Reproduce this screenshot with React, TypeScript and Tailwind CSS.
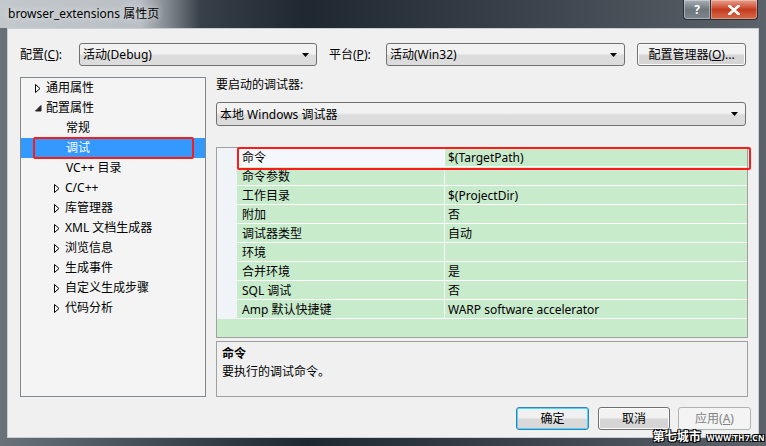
import React from 'react'

const font = { fontFamily: '"Noto Sans", "Noto Sans CJK SC", sans-serif' }

interface TreeItem {
  label: string
  level: 0 | 1
  expander?: 'closed' | 'open'
  selected?: boolean
}

const treeItems: TreeItem[] = [
  { label: '通用属性', level: 0, expander: 'closed' },
  { label: '配置属性', level: 0, expander: 'open' },
  { label: '常规', level: 1 },
  { label: '调试', level: 1, selected: true },
  { label: 'VC++ 目录', level: 1 },
  { label: 'C/C++', level: 1, expander: 'closed' },
  { label: '库管理器', level: 1, expander: 'closed' },
  { label: 'XML 文档生成器', level: 1, expander: 'closed' },
  { label: '浏览信息', level: 1, expander: 'closed' },
  { label: '生成事件', level: 1, expander: 'closed' },
  { label: '自定义生成步骤', level: 1, expander: 'closed' },
  { label: '代码分析', level: 1, expander: 'closed' },
]

const props = [
  { name: '命令', value: '$(TargetPath)' },
  { name: '命令参数', value: '' },
  { name: '工作目录', value: '$(ProjectDir)' },
  { name: '附加', value: '否' },
  { name: '调试器类型', value: '自动' },
  { name: '环境', value: '' },
  { name: '合并环境', value: '是' },
  { name: 'SQL 调试', value: '否' },
  { name: 'Amp 默认快捷键', value: 'WARP software accelerator' },
]

const DropArrow = () => (
  <svg width="7" height="4" viewBox="0 0 7 4" className="shrink-0">
    <path d="M0 0 H7 L3.5 4 Z" fill="#000" />
  </svg>
)

const Expander = ({ kind }: { kind: 'closed' | 'open' }) =>
  kind === 'closed' ? (
    <svg width="6" height="9" viewBox="0 0 6 9">
      <path d="M0.5 0.5 L5 4.5 L0.5 8.5 Z" fill="#fff" stroke="#000" strokeWidth="1" />
    </svg>
  ) : (
    <svg width="7" height="7" viewBox="0 0 7 7">
      <path d="M6 0.5 L6 6 L0.5 6 Z" fill="#262626" stroke="#262626" strokeWidth="1" />
    </svg>
  )

const Combo = ({ text, className }: { text: string; className: string }) => (
  <div
    className={`flex items-center justify-between rounded-[3px] border border-[#707070] bg-gradient-to-b from-[#f2f2f2] from-45% to-[#dcdcdc] to-55% pl-[3px] pr-[7px] text-[12px] ${className}`}
  >
    <span className="pt-[1px] leading-[16px]">{text}</span>
    <DropArrow />
  </div>
)

const WinButton = ({
  children,
  className = '',
  variant = 'normal',
}: {
  children: React.ReactNode
  className?: string
  variant?: 'normal' | 'default' | 'disabled'
}) => {
  const look =
    variant === 'default'
      ? 'border-[#3c7fb1] shadow-[inset_0_0_0_1px_#48d8fb] bg-gradient-to-b from-[#f0f0f0] from-45% to-[#d9d9d9] to-55% text-black'
      : variant === 'disabled'
        ? 'border-[#adb2b5] bg-[#f4f4f4] text-[#838383]'
        : 'border-[#707070] shadow-[inset_0_0_0_1px_#fcfcfc] bg-gradient-to-b from-[#f2f2f2] from-45% to-[#d5d5d5] to-55% text-black'
  return (
    <div
      className={`flex h-[23px] items-center justify-center rounded-[3px] border text-[12px] ${look} ${className}`}
    >
      <span className="leading-[16px]">{children}</span>
    </div>
  )
}

export default function App() {
  return (
    <div
      style={font}
      className="relative flex h-[446px] w-[766px] flex-col overflow-hidden bg-gradient-to-r from-[#6a7279] via-[#1f2731] via-40% to-[#5c636a] text-black"
    >
      {/* title bar */}
      <div className="relative flex h-[28px] shrink-0 items-start">
        <div className="absolute left-0 top-0 h-[28px] w-[200px] bg-gradient-to-r from-[#c3c8cc] via-[#b9bfc4] via-70% to-transparent" />
        <span className="relative ml-[8px] mt-[5px] text-[12px] leading-[18px] text-black [text-shadow:0_0_6px_#eef0f2]">
          browser_extensions 属性页
        </span>
        <div className="relative ml-auto mr-[8px] flex h-[20px]">
          <div className="flex w-[28px] items-center justify-center rounded-bl-[4px] border border-t-0 border-[#2a2f35] bg-gradient-to-b from-[#a9afb5] via-[#6f777e] to-[#7d858c] text-[12px] font-bold leading-none text-white shadow-[inset_0_0_0_1px_rgba(255,255,255,0.35)]">
            ?
          </div>
          <div className="flex w-[47px] items-center justify-center rounded-br-[4px] border border-l-0 border-t-0 border-[#2a2f35] bg-gradient-to-b from-[#e7a08c] via-[#c63a1e] to-[#d4694a] text-[13px] font-bold leading-none text-white shadow-[inset_0_0_0_1px_rgba(255,255,255,0.3)]">
            <svg width="12" height="10" viewBox="0 0 12 10">
              <path d="M1.5 1 L10.5 9 M10.5 1 L1.5 9" stroke="#fff" strokeWidth="2.6" strokeLinecap="square" />
            </svg>
          </div>
        </div>
      </div>

      {/* client area */}
      <div className="mx-[7px] flex h-[410px] flex-col border border-[#c9ced2] bg-[#f0f0f0] pl-[12px] pt-[14px]">
        {/* config row */}
        <div className="flex h-[23px] items-center">
          <span className="w-[59px] text-[12px] leading-[16px]">
            配置(<u>C</u>):
          </span>
          <Combo text="活动(Debug)" className="h-[23px] w-[238px]" />
          <span className="ml-[12px] w-[57px] text-[12px] leading-[16px]">
            平台(<u>P</u>):
          </span>
          <Combo text="活动(Win32)" className="h-[23px] w-[239px]" />
          <WinButton className="ml-[12px] w-[109px]">
            配置管理器(<u>O</u>)...
          </WinButton>
        </div>

        {/* main */}
        <div className="mt-[11px] flex h-[320px]">
          {/* tree */}
          <div className="relative h-[320px] w-[186px] border border-[#828790] bg-[#f4f4f4]">
            {treeItems.map((item) => (
              <div
                key={item.label}
                className={`flex h-[20px] items-center text-[12px] ${
                  item.selected ? 'bg-[#3399ff] text-white' : ''
                }`}
              >
                <div
                  className={`flex w-[12px] items-center justify-center ${
                    item.level === 0 ? 'ml-[11px]' : 'ml-[30px]'
                  }`}
                >
                  {item.expander && <Expander kind={item.expander} />}
                </div>
                <span
                  className={`leading-[16px] ${
                    item.level === 1 && !item.expander ? 'ml-[3px]' : 'ml-[2px]'
                  }`}
                >
                  {item.label}
                </span>
              </div>
            ))}
            <div className="absolute left-[12px] top-[59px] h-[22px] w-[161px] rounded-[2px] border-2 border-[#ff1a1a]" />
          </div>

          {/* right panel */}
          <div className="ml-[10px] flex w-[532px] flex-col">
            <div className="h-[25px] pt-[1px] text-[12px] leading-[14px]">要启动的调试器:</div>
            <Combo text="本地 Windows 调试器" className="h-[24px] w-[530px]" />

            {/* property grid */}
            <div className="relative mt-[21px] flex h-[191px] flex-col border border-[#a0a0a0] bg-[#c8ebcc]">
              <div className="flex">
                <div className="w-[20px] shrink-0 bg-[#f0f4f9]" />
                <div className="flex flex-1 flex-col">
                  {props.map((p, i) => (
                    <div key={p.name} className="flex h-[19px] border-b border-white text-[12px]">
                      <div
                        className={`flex w-[207px] items-center pl-[5px] pt-[2px] ${
                          i === 0 ? 'bg-[#f4f7fc]' : ''
                        }`}
                      >
                        <span className="leading-[16px]">{p.name}</span>
                      </div>
                      <div className="flex flex-1 items-center border-l border-white pl-[3px] pt-[2px]">
                        <span className="leading-[16px]">{p.value}</span>
                      </div>
                    </div>
                  ))}
                </div>
              </div>
              <div className="absolute left-[20px] top-[-1px] h-[23px] w-[514px] rounded-[2px] border-2 border-[#ff1a1a]" />
            </div>

            {/* description */}
            <div className="mt-[3px] h-[56px] border border-[#a0a0a0] bg-[#f0f0f0] pl-[5px] pt-[3px] text-[12px]">
              <div className="font-bold leading-[18px]">命令</div>
              <div className="leading-[18px]">要执行的调试命令。</div>
            </div>
          </div>
        </div>

        {/* buttons */}
        <div className="mt-[10px] flex justify-end pr-[7px]">
          <WinButton variant="default" className="w-[73px]">
            确定
          </WinButton>
          <WinButton className="ml-[9px] w-[72px]">取消</WinButton>
          <WinButton variant="disabled" className="ml-[8px] w-[73px]">
            应用(<u>A</u>)
          </WinButton>
        </div>
      </div>

      {/* watermark */}
      <div className="absolute bottom-[1px] right-[1px] flex items-end gap-[6px]">
        <span className="text-[12px] font-bold leading-[16px] text-white [text-shadow:1px_1px_0_#000,-1px_-1px_0_#000,1px_-1px_0_#000,-1px_1px_0_#000]">
          第七城市
        </span>
        <span className="mb-[2px] text-[8px] font-bold leading-[10px] tracking-[0.5px] text-white [text-shadow:1px_1px_0_#000,-1px_-1px_0_#000,1px_-1px_0_#000,-1px_1px_0_#000]">
          WWW.TH7.CN
        </span>
      </div>
    </div>
  )
}
